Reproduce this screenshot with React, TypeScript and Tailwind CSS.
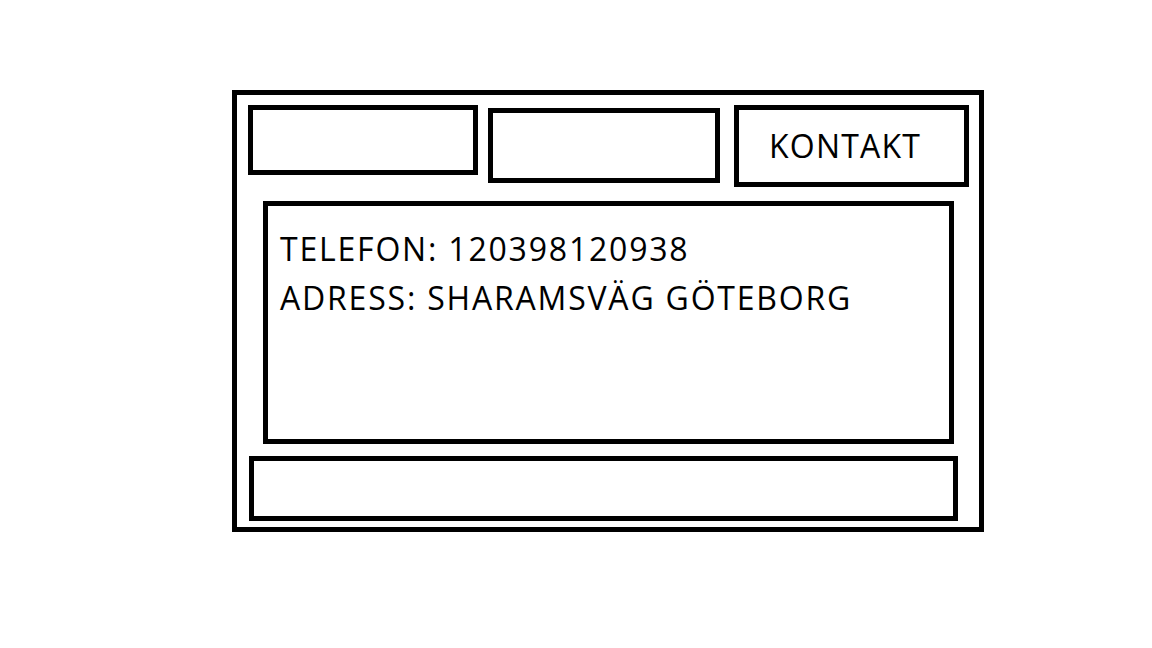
export default function App() {
  return (
    <div className="h-[648px] w-[1152px] bg-white pl-[232px] pt-[90px] font-['Open_Sans',sans-serif] text-black">
      <div className="box-border flex h-[442px] w-[752px] flex-col border-[5px] border-black">
        <div className="flex items-start">
          <div className="ml-[11px] mt-[10px] box-border h-[70px] w-[230px] border-[5px] border-black" />
          <div className="ml-[10px] mt-[13px] box-border h-[75px] w-[232px] border-[5px] border-black" />
          <div className="ml-[14px] mt-[10px] box-border h-[82px] w-[235px] border-[5px] border-black pl-[30px] pt-[11px] text-[32px] leading-[49px] tracking-[1.2px]">
            KONTAKT
          </div>
        </div>
        <div className="ml-[26px] mt-[14px] box-border h-[243px] w-[691px] border-[5px] border-black pl-[12px] pt-[18px] text-[32px] leading-[49px] tracking-[1.8px]">
          <p>TELEFON: 120398120938</p>
          <p>ADRESS: SHARAMSVÄG GÖTEBORG</p>
        </div>
        <div className="ml-[12px] mt-[12px] box-border h-[65px] w-[709px] border-[5px] border-black" />
      </div>
    </div>
  );
}
